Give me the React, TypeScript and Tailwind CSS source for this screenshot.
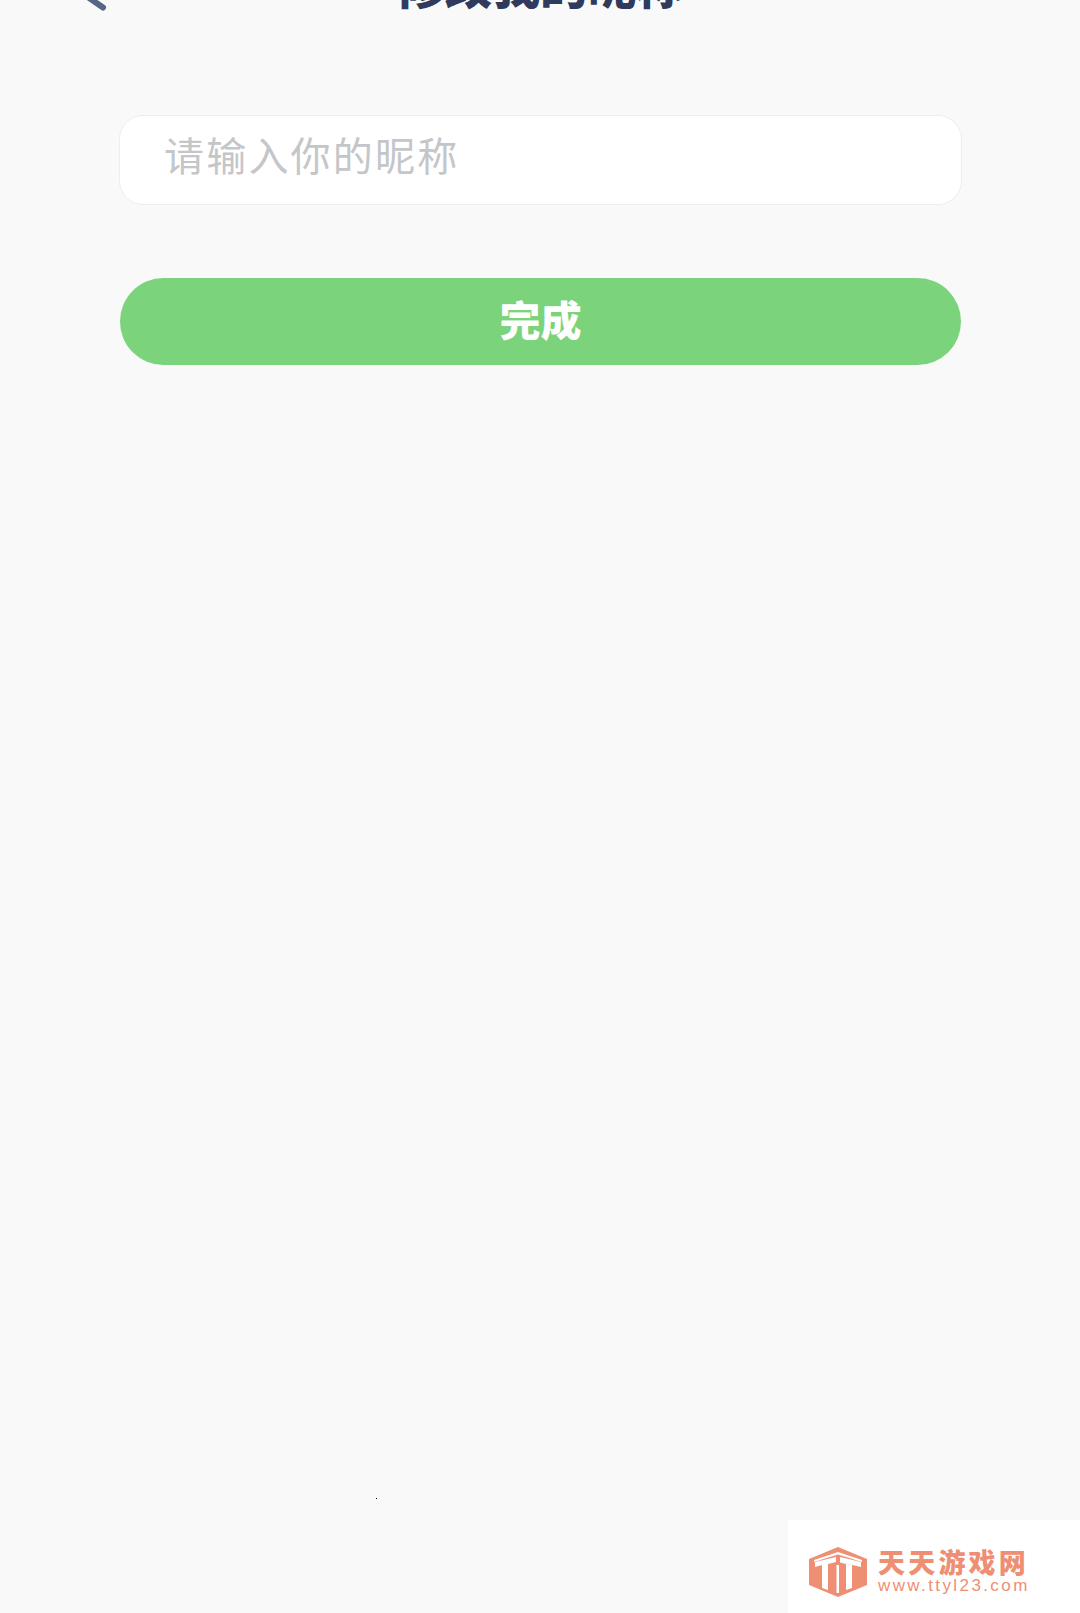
const cjk = "font-['Noto_Sans_CJK_SC','Noto_Sans',sans-serif]"

function Logo() {
  return (
    <svg width="58" height="50" viewBox="0 0 58 50" className="shrink-0">
      <path d="M29 0 58 12V38L29 50 0 38V12Z" fill="#ee8f73" />
      <path d="M5 13 29 5 53 13 53 15 29 7.5 5 15Z" fill="#fff" />
      <path d="M6 15 27 10V15L19 17V43L13 41V18L6 20Z" fill="#fff" />
      <path d="M52 15 31 10V15L43 18V41L37 43V17L31 15.5V15L52 20Z" fill="#fff" />
      <path d="M27.5 18H30V46L27.5 46Z" fill="#fff" />
    </svg>
  )
}

export default function App() {
  return (
    <div className={`relative flex h-[1613px] w-[1080px] flex-col overflow-hidden bg-[#f9f9fa] ${cjk}`}>
      {/* Header, cut off by the top edge */}
      <div className="relative -mt-[41px] flex h-[48px] items-center justify-center">
        <svg width="40" height="60" viewBox="0 0 40 60" className="absolute left-[72px] top-[3px]" fill="none">
          <path d="M10 31 31 45.5" stroke="#566687" strokeWidth="6" strokeLinecap="round" />
        </svg>
        <h1 className="text-[48px] leading-[48px] font-black text-[#2f3a5c]">修改我的昵称</h1>
      </div>

      <div className="mt-[108px] flex flex-col gap-[73px] pl-[119px] pr-[118px]">
        <div className="flex h-[90px] items-center rounded-[24px] border border-[#eeeeee] bg-white pb-[12px] pl-[44px]">
          <span className="text-[40px] leading-none tracking-[2.2px] text-[#c4c6c9]">请输入你的昵称</span>
        </div>
        <button className="mx-px flex h-[87px] items-center justify-center rounded-full bg-[#7bd37b] pb-[6px] text-[41px] font-black text-white">
          完成
        </button>
      </div>

      <div className="absolute left-[376px] top-[1498px] h-px w-px bg-black" />

      <div className="mt-auto flex h-[93px] w-[292px] items-center gap-[11px] self-end bg-white pl-[21px] pt-[10px]">
        <Logo />
        <div className="-mt-[2px] flex flex-col text-[#ee8f73]">
          <span className="text-[27px] leading-[30px] font-black tracking-[3.2px]">天天游戏网</span>
          <span className="font-['Liberation_Sans',sans-serif] text-[17px] leading-[18px] tracking-[2.4px]">www.ttyl23.com</span>
        </div>
      </div>
    </div>
  )
}
